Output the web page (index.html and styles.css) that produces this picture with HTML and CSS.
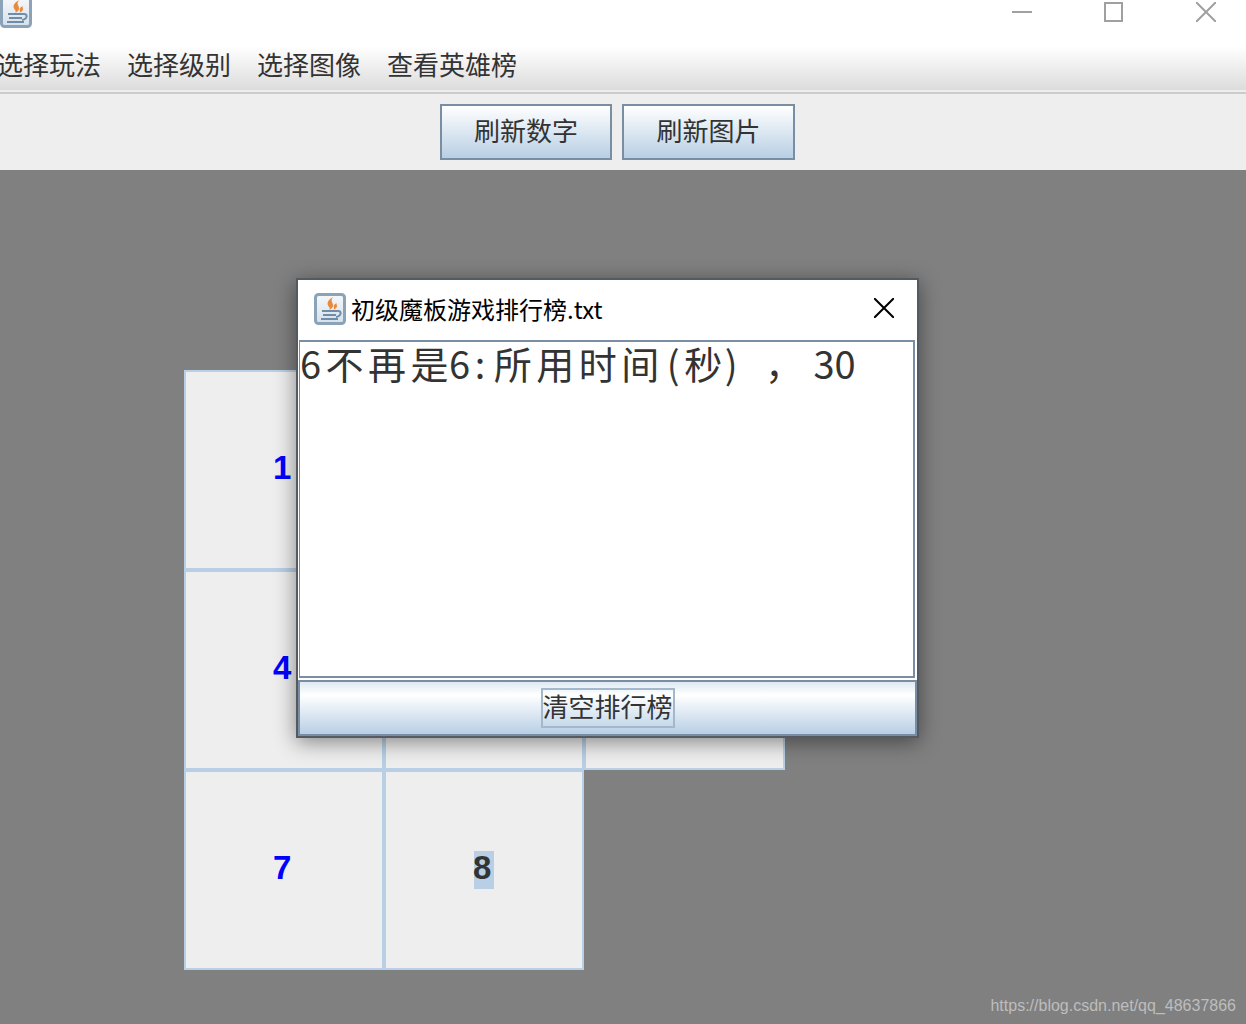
FILE: index.html
```html
<!DOCTYPE html>
<html lang="zh-CN">
<head>
    <meta charset="UTF-8">
    <title>拼图游戏</title>
    <link rel="stylesheet" href="styles.css">
</head>
<body>
    <svg class="defs" width="0" height="0">
        <defs>
            <linearGradient id="iconBg" x1="0" y1="0" x2="0" y2="1">
                <stop offset="0" stop-color="#f6f8fa"/>
                <stop offset="1" stop-color="#d5e0ea"/>
            </linearGradient>
        </defs>
        <symbol id="javaIcon" viewBox="0 0 32 32">
            <rect x="1.5" y="1.5" width="29" height="29" rx="3" fill="url(#iconBg)" stroke="#8ba3b8" stroke-width="3"/>
            <path d="M19 4c-5 3-7 6-4 10 1 1 1 2 0 3 4-2 5-4 3-8-1-2 0-3 1-5zM23 10c-2 1-4 2-3 5 0 1 0 1-1 2 3-1 4-3 4-4s-1-2 0-3z" fill="#e98a38"/>
            <path d="M8 18h15M9 22h13M7 26h17M23 18c5-1 5 5-1 6" fill="none" stroke="#6f8da8" stroke-width="2"/>
        </symbol>
    </svg>

    <div class="titlebar">
        <svg class="app-icon"><use href="#javaIcon"/></svg>
        <div class="win-controls">
            <svg class="win-btn" viewBox="0 0 20 20"><path d="M0 10h20"/></svg>
            <svg class="win-btn" viewBox="0 0 20 20"><path d="M1 1h17v18H1z"/></svg>
            <svg class="win-btn" viewBox="0 0 20 20"><path d="M0 0l20 20M20 0L0 20"/></svg>
        </div>
    </div>

    <div class="menubar">
        <span class="menu-item">选择玩法</span>
        <span class="menu-item">选择级别</span>
        <span class="menu-item">选择图像</span>
        <span class="menu-item">查看英雄榜</span>
    </div>

    <div class="toolbar">
        <button class="tool-btn">刷新数字</button>
        <button class="tool-btn">刷新图片</button>
    </div>

    <div class="board">
        <div class="puzzle">
            <div class="cell"><span class="num">1</span></div>
            <div class="cell"></div>
            <div class="cell"></div>
            <div class="cell"><span class="num">4</span></div>
            <div class="cell"></div>
            <div class="cell"></div>
            <div class="cell"><span class="num">7</span></div>
            <div class="cell"><span class="num num-selected">8</span></div>
        </div>

        <div class="dialog">
            <div class="dialog-title">
                <svg class="dialog-icon"><use href="#javaIcon"/></svg>
                <span class="dialog-name">初级魔板游戏排行榜.txt</span>
                <svg class="dialog-close" viewBox="0 0 20 20"><path d="M0 0l20 20M20 0L0 20"/></svg>
            </div>
            <div class="score-area">6不再是<span class="name-end">6:</span>所用时间<span class="paren-open">(</span>秒<span class="paren-close">)</span><span class="comma">，</span><span class="score">30</span></div>
            <div class="clear-bar">
                <span class="clear-label">清空排行榜</span>
            </div>
        </div>

        <div class="watermark">https://blog.csdn.net/qq_48637866</div>
    </div>
</body>
</html>
```

FILE: styles.css
```css
body {
    margin: 0;
    height: 1024px;
    overflow: hidden;
    display: flex;
    flex-direction: column;
    background-color: #808080;
    font-family: "Noto Sans CJK SC", "Liberation Sans", sans-serif;
    color: #333;
}

.defs {
    position: absolute;
}

.titlebar {
    height: 46px;
    flex: none;
    background-color: #fff;
    display: flex;
    justify-content: space-between;
    overflow: hidden;
}

.app-icon {
    width: 32px;
    height: 32px;
    margin-top: -4px;
    filter: blur(0.4px);
}

.win-controls {
    display: flex;
    gap: 72px;
    padding: 2px 30px 0 0;
    height: 20px;
}

.win-btn {
    width: 20px;
    height: 20px;
    fill: none;
    stroke: #a0a0a0;
    stroke-width: 2;
}

.menubar {
    height: 44px;
    flex: none;
    display: flex;
    gap: 26px;
    margin-left: -3px;
    padding-right: 3px;
    background: linear-gradient(#fff, #dcdcdc);
    font-size: 26px;
    line-height: 36px;
}

.menu-item {
    white-space: nowrap;
}

.toolbar {
    height: 80px;
    flex: none;
    box-sizing: border-box;
    display: flex;
    justify-content: center;
    gap: 10px;
    padding: 12px 11px 0 0;
    background-color: #eee;
    border-top: 2px solid #eee;
    box-shadow: inset 0 2px 0 #ccc;
}

.tool-btn {
    width: 172px;
    height: 56px;
    padding: 0 0 5px 0;
    border: 2px solid #7a8ea3;
    background: linear-gradient(#fff, #b8cfe5);
    font-family: inherit;
    font-size: 26px;
    color: #333;
}

.tool-btn + .tool-btn {
    width: 173px;
}

.board {
    flex: 1;
    position: relative;
    padding: 200px 0 0 184px;
}

.puzzle {
    display: grid;
    grid-template-columns: 200px 200px 201px;
    grid-auto-rows: 200px;
}

.cell {
    box-sizing: border-box;
    border: 2px solid #b8cfe5;
    background-color: #eee;
    display: flex;
    justify-content: center;
    align-items: center;
}

.num {
    width: 20px;
    height: 38px;
    line-height: 34px;
    text-indent: -1px;
    font-family: "Liberation Sans", sans-serif;
    font-weight: bold;
    font-size: 33px;
    color: #00f;
}

.num-selected {
    background-color: #b8cfe5;
    color: #333;
}

.dialog {
    position: absolute;
    left: 296px;
    top: 108px;
    width: 623px;
    height: 460px;
    box-sizing: border-box;
    border: 2px solid #555a60;
    background-color: #fff;
    display: flex;
    flex-direction: column;
    box-shadow: 0 4px 20px rgba(0, 0, 0, 0.45);
}

.dialog-title {
    height: 60px;
    flex: none;
    display: flex;
    align-items: center;
    padding: 0 23px 0 16px;
}

.dialog-icon {
    width: 32px;
    height: 32px;
    margin-top: -2px;
    filter: blur(0.4px);
}

.dialog-name {
    flex: 1;
    margin-left: 5px;
    margin-top: -4px;
    font-size: 24px;
    color: #000;
}

.dialog-close {
    width: 20px;
    height: 20px;
    margin-top: -4px;
    fill: none;
    stroke: #000;
    stroke-width: 2;
}

.score-area {
    height: 338px;
    flex: none;
    box-sizing: border-box;
    margin: 0 2px 2px 1px;
    border: 2px solid #7a8ea3;
    border-left-width: 1px;
    font-size: 38px;
    line-height: 42px;
    letter-spacing: 4.5px;
    white-space: nowrap;
    color: #333;
}

.name-end {
    margin-left: -4px;
    margin-right: 4px;
}

.paren-open {
    margin-left: 3px;
}

.paren-close {
    margin-left: -2px;
}

.comma {
    margin-left: 23px;
    margin-right: 6px;
}

.score {
    letter-spacing: 0;
}

.clear-bar {
    flex: 1;
    box-sizing: border-box;
    border: 2px solid #7a8ea3;
    background: linear-gradient(#dfe9f3, #fff 25%, #b8cfe5);
    display: flex;
    justify-content: center;
    align-items: center;
}

.clear-label {
    width: 134px;
    height: 40px;
    box-sizing: border-box;
    border: 2px solid #a3b8cc;
    text-align: center;
    font-size: 26px;
    line-height: 32px;
    white-space: nowrap;
    color: #333;
}

.watermark {
    position: absolute;
    right: 10px;
    bottom: 9px;
    font-family: "Liberation Sans", sans-serif;
    font-size: 16px;
    color: #bdbdbd;
}
```
